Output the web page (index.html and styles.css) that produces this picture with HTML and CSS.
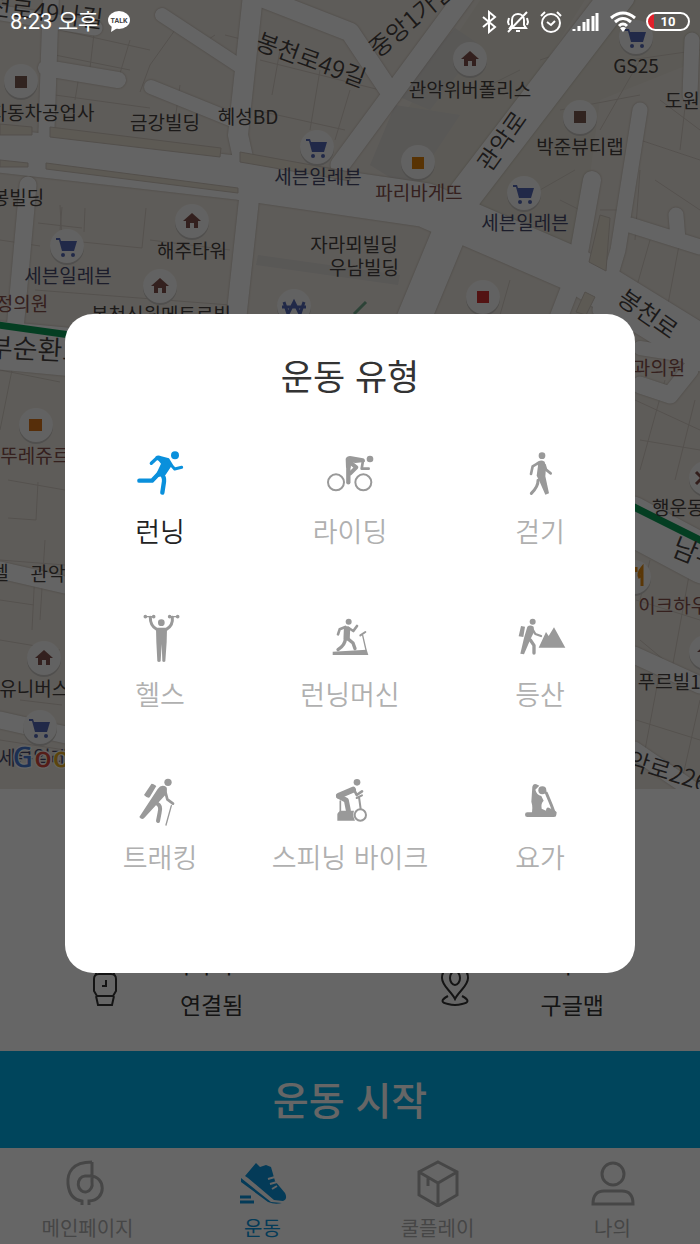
FILE: index.html
```html
<!DOCTYPE html>
<html lang="ko">
<head>
    <meta charset="UTF-8">
    <meta name="viewport" content="width=device-width, initial-scale=1.0">
    <title>운동</title>
    <link rel="stylesheet" href="styles.css">
</head>
<body>
    <div class="app">
        <svg class="map" viewBox="0 0 700 789" role="img" aria-label="지도">
            <defs>
                <g id="pin"><circle cy="2" r="17" fill="#c9c6c2"/><circle r="17" fill="#f6f5f4"/></g>
                <g id="home"><use href="#pin"/><path d="M0-8 9 0H6V7H2V2H-2V7H-6V0H-9Z" fill="#80524c"/></g>
                <g id="shop"><use href="#pin"/><path d="M-11-8H-7L-6-5H10L7 5H-5L-8-6H-11ZM-4 3V5" fill="#5468b4"/><circle cx="-4" cy="9" r="2" fill="#5468b4"/><circle cx="6" cy="9" r="2" fill="#5468b4"/></g>
            </defs>
            <rect width="700" height="789" fill="#ece6de"/>
            <path class="band" d="M480 0H585L455 205 370 165ZM630 0H700V60L600 100 580 250 470 210Z"/>
            <path class="block" d="M455 28 480 45 430 110 395 95ZM395 105 460 115 410 190 370 165ZM258 255 400 275 398 285 256 265Z"/>
            <path class="lot" d="M60 30 150 50M55 55 130 70M95 25 90 68M175 30 150 65 140 92M130 40 118 80M180 85 175 120M200 45 215 35M225 35 245 40M260 60 380 90M280 50 272 95M320 70 310 130M255 110 345 130M350 90 335 140M55 95 150 108M80 70 75 100M60 205 62 240 142 248 146 208M62 207 60 230M85 208 84 232M38 223 82 228M150 240 230 250M35 290 230 305M0 240 40 246M270 330 390 330M480 90 520 70M560 110 640 95M630 60 700 50M640 140 700 160M660 100 700 130M640 170 635 240M655 180 700 210M560 200 580 210M540 190 575 170M600 210 620 210M630 230 700 250M650 240 630 310M680 240 665 320M640 60 600 130M690 65 680 150M540 60 570 50M500 130 530 100M430 300 420 340M510 280 500 315M0 370 60 382M0 430 20 330M24 360 62 366M8 480 65 490M38 482 36 520 8 518M0 560 65 565M35 570 32 630M0 600 34 605M0 640 60 650M45 540 40 620M20 700 62 705M0 740 65 750M635 400 700 430M640 440 700 450M665 380 640 470M695 400 675 480M636 600 700 620M650 560 640 600M690 570 670 680M640 640 700 690M660 670 645 750M700 700 680 789M636 720 700 740"/>
            <g class="roads">
                <path d="M-5 12 95 28" stroke-width="15"/>
                <path d="M51-5 46 145M46 68 118 80" stroke-width="16"/>
                <path d="M151 87 240 123M162 15 238 65" stroke-width="14"/>
                <path d="M253-5 238 135 250 190 235 330" stroke-width="20"/>
                <path d="M255-5 350 32 392 95M465-5 340 165" stroke-width="19"/>
                <path d="M-5 150 240 178 425 205 575 270 705 350" stroke-width="44"/>
                <path d="M618-5 465 195 405 340" stroke-width="34"/>
                <path d="M28 185 15 330" stroke-width="17"/>
                <path d="M592 180 575 275 550 340" stroke-width="18"/>
                <path d="M640 110 618 250 600 310M692 40 690 95M630 225 700 247M676 215 678 240" stroke-width="15"/>
                <path d="M640 348 678 354 690 330 705 328" stroke-width="14"/>
                <path d="M-5 345 70 352M630 520 705 560" stroke-width="48"/>
                <path d="M0 570 65 585M634 655 700 685M634 750 700 795M640 385 670 395 690 370M0 720 66 735" stroke-width="17"/>
            </g>
            <path class="median" d="M50 127 221 148 220 157 50 137ZM0 124 32 127V135H0ZM240 152 350 172V181L240 162ZM46 163 238 188V193L46 169ZM0 160 28 163V167H0ZM600 215 589 262 606 271 610 218ZM585 292 595 297 586 315 576 312Z"/>
            <path d="M-2 325 70 335M630 505 702 541" stroke="#0c9b56" stroke-width="7"/>
            <path d="M354 314 366 302" stroke="#71a78b" stroke-width="3"/>

            <g class="places">
                <use href="#shop" x="636" y="37"/>
                <use href="#home" x="470" y="59"/>
                <use href="#shop" x="317" y="147"/>
                <use href="#shop" x="524" y="193"/>
                <use href="#shop" x="67" y="246"/>
                <use href="#home" x="192" y="221"/>
                <use href="#home" x="160" y="286"/>
                <use href="#home" x="44" y="658"/>
                <use href="#shop" x="40" y="727"/>
                <use href="#home" x="706" y="652"/>
                <use href="#pin" x="21" y="81"/><path d="M15 76h12v12H15Z" fill="#7a5b50"/>
                <use href="#pin" x="580" y="117"/><path d="M574 111h12v12h-12Z" fill="#7a5b50"/>
                <use href="#pin" x="418" y="162"/><path d="M412 157h12v12h-12Z" fill="#dd800c"/>
                <use href="#pin" x="483" y="297"/><path d="M477 291h12v12h-12Z" fill="#cf3030"/>
                <use href="#pin" x="36" y="425"/><path d="M29 419h13v12H29Z" fill="#d8731a"/>
                <use href="#pin" x="294" y="306"/><path d="M284 302 288 314 294 302 300 314 304 302M282 307H306" stroke="#5468b4" stroke-width="3" fill="none"/>
                <use href="#pin" x="706" y="478"/><path d="M696 472 702 478 696 484M702 470V486" stroke="#7d4c48" stroke-width="3" fill="none"/>
                <use href="#pin" x="634" y="577"/><path d="M636 567V572M642 586V568Q637 574 640 578" stroke="#e18a12" stroke-width="3" fill="none"/>
            </g>

            <g class="labels">
                <text x="42" y="120">자동차공업사</text>
                <text x="165" y="130">금강빌딩</text>
                <text x="248" y="124">혜성BD</text>
                <text x="470" y="97">관악위버폴리스</text>
                <text x="636" y="73">GS25</text>
                <text x="691" y="108">도원빌</text>
                <text x="580" y="154">박준뷰티랩</text>
                <text x="18" y="205">봉빌딩</text>
                <text x="318" y="184" class="store">세븐일레븐</text>
                <text x="525" y="230" class="store">세븐일레븐</text>
                <text x="68" y="283" class="store">세븐일레븐</text>
                <text x="419" y="200" class="food">파리바게뜨</text>
                <text x="192" y="258">해주타워</text>
                <text x="354" y="252">자라뫼빌딩</text>
                <text x="364" y="275">우남빌딩</text>
                <text x="22" y="311" class="food">정의원</text>
                <text x="161" y="322">봉천신원메트로빌</text>
                <text x="659" y="375" class="food">과의원</text>
                <text x="44" y="463" class="food">뚜레쥬르점</text>
                <text x="0" y="580">텔</text>
                <text x="48" y="581">관악</text>
                <text x="687" y="515">행운동점</text>
                <text x="682" y="613" class="food">이크하우스</text>
                <text x="43" y="696">유니버스빌</text>
                <text x="678" y="689">푸르빌1차</text>
                <text x="42" y="765" class="store">세븐일레븐</text>
            </g>
            <g class="street">
                <text transform="translate(45 21) rotate(7)">천로49나길</text>
                <text transform="translate(308 68) rotate(20)">봉천로49길</text>
                <text transform="translate(417 26) rotate(-40)">중앙1가길</text>
                <text transform="translate(509 146) rotate(-55)">관악로</text>
                <text transform="translate(643 321) rotate(35)">봉천로</text>
                <text transform="translate(37 359) rotate(3)" class="main">부순환로</text>
                <text transform="translate(716 573) rotate(22)" class="main">남부순환</text>
                <text transform="translate(676 783) rotate(17)">악로226길</text>
            </g>
            <text class="google" x="12" y="768"><tspan fill="#4778d0">G</tspan><tspan fill="#d4493e">o</tspan><tspan fill="#e3ab24">o</tspan><tspan fill="#4778d0">g</tspan></text>
        </svg>

        <section class="settings">
            <div class="setting">
                <svg class="setting-icon" viewBox="0 0 34 46"><path d="M8 12 9 3H25L26 12M8 34 10 43H24L26 34M11 12H23Q28 12 28 17V29L25 34H9L6 29V17Q6 12 11 12ZM18 18V24H14"/></svg>
                <div class="setting-text"><span>디바이스</span><span>연결됨</span></div>
            </div>
            <div class="setting">
                <svg class="setting-icon" viewBox="0 0 34 46"><path d="M17 37C13 29 4 24 4 16A13 13 0 0 1 30 16C30 24 21 29 17 37ZM10 34Q-1 40 10 42Q17 44 24 42Q35 40 24 34"/><ellipse cx="17" cy="16" rx="5" ry="7"/></svg>
                <div class="setting-text"><span>지도</span><span>구글맵</span></div>
            </div>
        </section>

        <button class="start">운동 시작</button>

        <nav class="tabs">
            <a href="#main">
                <svg viewBox="0 0 48 48"><path d="M28 3V23A7 8 0 1 1 21 17H26C42 17 43 41 25 42V46M28 3C8 3 3 14 4 25C5 35 10 41 18 42V46"/></svg>
                메인페이지
            </a>
            <a href="#workout" class="active">
                <svg viewBox="0 0 48 48"><path class="fill" d="M6 17 17 4 21 8 27 6 32 8 36 22 46 34Q49 40 44 42L35 41 9 19ZM2 19 32 43 43 44Q36 46 29 43L2 23Z"/><path class="lace" d="M29 20 36 18M31 25 38 23M33 30 38 27"/><path d="M1 38H12M1 43H15"/></svg>
                운동
            </a>
            <a href="#coolplay">
                <svg viewBox="0 0 48 48"><path d="M24 3 43 13V36L24 47 5 36V13ZM5 13 24 24 43 13M24 24V47M14 19V27"/></svg>
                쿨플레이
            </a>
            <a href="#me">
                <svg viewBox="0 0 48 48"><circle cx="24" cy="15" r="11"/><path d="M4 45C4 34 10 32 15 32H33C38 32 44 34 44 45Z"/></svg>
                나의
            </a>
        </nav>
    </div>

    <div class="overlay">
        <div class="modal" role="dialog" aria-labelledby="modal-title">
            <h1 id="modal-title">운동 유형</h1>
            <div class="types">
                <button class="type selected">
                    <svg viewBox="0 0 144 144"><circle class="fill" cx="117" cy="19" r="12"/><path class="fill" d="M58 23Q66 17 76 22L99 28 110 46 88 79 64 85 60 76 75 44Z"/><path d="M46 43 62 28 88 33" stroke-width="10"/><path d="M98 40 116 60 137 55" stroke-width="9"/><path d="M70 72 48 95 10 95" stroke-width="13"/><path d="M74 72Q86 84 84 98L79 131" stroke-width="13"/></svg>
                    <span>런닝</span>
                </button>
                <button class="type">
                    <svg viewBox="0 0 144 144"><circle cx="30" cy="100" r="24" stroke-width="6"/><circle cx="112" cy="100" r="24" stroke-width="6"/><circle class="fill" cx="132" cy="30" r="10"/><path class="fill" d="M59 29Q64 19 77 22L111 28Q119 31 116 39L88 42 75 40 74 56 60 56Z"/><path d="M67 30V100" stroke-width="13"/><path d="M72 40 91 55 73 73" stroke-width="12"/><path d="M111 35 107 59H128" stroke-width="8"/></svg>
                    <span>라이딩</span>
                </button>
                <button class="type">
                    <svg viewBox="0 0 144 144"><circle class="fill" cx="78" cy="20" r="10"/><path class="fill" d="M62 40Q74 30 86 38L90 55 88 82 99 133 88 137 70 96 62 80 66 50Z"/><path d="M65 43 50 52 45 75" stroke-width="8"/><path d="M86 48 90 62 104 73" stroke-width="8"/><path d="M66 94Q67 112 46 133" stroke-width="9"/></svg>
                    <span>걷기</span>
                </button>
                <button class="type">
                    <svg viewBox="0 0 144 144"><circle class="fill" cx="76" cy="32" r="10"/><path class="fill" d="M60 50H93L92 90 88 148Q84 152 79 148L77 96 74 148Q69 152 64 148L61 90Z"/><path d="M43 16Q42 40 62 52H91Q112 40 109 16" stroke-width="9"/><path d="M27 14H54M99 14H126" stroke-width="4"/><path d="M28 14V14.1M53 14V14.1M101 14V14.1M125 14V14.1" stroke-width="11"/></svg>
                    <span>헬스</span>
                </button>
                <button class="type">
                    <svg viewBox="0 0 144 144"><circle class="fill" cx="68" cy="29" r="9"/><path d="M63 52 62 76" stroke-width="19"/><path d="M58 45 41 52 36 67M68 48 82 57 93 42" stroke-width="8"/><path d="M58 80Q58 98 36 113M65 80 81 93 87 110" stroke-width="10"/><path class="fill" d="M20 119 122 113 127 129H20Z"/><path d="M120 114 110 70" stroke-width="4"/><path d="M103 70 118 60" stroke-width="6"/></svg>
                    <span>런닝머신</span>
                </button>
                <button class="type">
                    <svg viewBox="0 0 144 144"><circle class="fill" cx="50" cy="29" r="9"/><path class="fill" d="M15 42 27 44 22 75 8 73ZM34 44Q42 37 53 44L54 60 44 80 24 127 13 125 24 78Z"/><path d="M49 51 58 66 75 72" stroke-width="7"/><path d="M43 84 54 100V123" stroke-width="10"/><path class="fill" d="M68 107 90 60 98 72 114 46 148 107Z"/></svg>
                    <span>등산</span>
                </button>
                <button class="type">
                    <svg viewBox="0 0 144 144"><circle class="fill" cx="96" cy="22" r="11"/><path class="fill" d="M46 27Q49 25 61 33L41 67Q35 71 24 60ZM65 42Q76 26 91 36Q96 44 88 60L24 130Q17 136 10 126Z"/><path d="M88 50 94 73 111 86" stroke-width="8"/><path d="M64 86Q76 92 71 112L66 138" stroke-width="12"/><path d="M106 92 90 150" stroke-width="4"/></svg>
                    <span>트래킹</span>
                </button>
                <button class="type">
                    <svg viewBox="0 0 144 144"><circle class="fill" cx="93" cy="22" r="10"/><path d="M81 44 39 62" stroke-width="18"/><path d="M84 44 92 60 108 49" stroke-width="8"/><path d="M38 64 61 76 67 106" stroke-width="15"/><path d="M43 78V112" stroke-width="5"/><path class="fill" d="M34 118Q35 110 46 107H84Q79 122 87 137H34Z"/><circle cx="103" cy="120" r="17" stroke-width="6"/><path d="M104 102 99 66M92 69 108 61" stroke-width="6"/></svg>
                    <span>스피닝 바이크</span>
                </button>
                <button class="type">
                    <svg viewBox="0 0 144 144"><circle class="fill" cx="79" cy="46" r="12"/><path class="fill" d="M49 35Q51 25 61 28L70 32 58 44Q62 60 76 63L83 77Q74 84 77 101L100 112 96 120H46Q52 98 46 80Z"/><path d="M91 54 106 90 116 117" stroke-width="9"/><path d="M34 119H114" stroke-width="14"/><path d="M97 105 115 114" stroke-width="14"/></svg>
                    <span>요가</span>
                </button>
            </div>
        </div>
    </div>

    <header class="status">
        <span class="time">8:23 오후</span>
        <svg class="talk" viewBox="0 0 24 22"><ellipse cx="12" cy="9" rx="11" ry="9" fill="#fff"/><path d="M5 14 4 21 12 16Z" fill="#fff"/><text x="12" y="12">TALK</text></svg>
        <div class="status-icons">
            <svg width="16" height="24" viewBox="0 0 16 24"><path d="M2 7 14 17 8 22V2L14 7 2 17"/></svg>
            <svg width="24" height="24" viewBox="0 0 24 24"><path d="M4 18H20L18 15V10C18 2 6 2 6 10V15ZM10 21H14M2 22 21 2M3 8 2 12 3 15M21 8 22 12 21 15"/></svg>
            <svg width="24" height="24" viewBox="0 0 24 24"><circle cx="12" cy="13" r="9"/><path d="M8 12 12 15 16 11M2 6 6 2M22 6 18 2"/></svg>
            <svg width="28" height="24" viewBox="0 0 28 24"><path d="M2 19V21M7 16V21M12 12V21M16 9V21M21 6V21M25 3V21" stroke-width="3"/></svg>
            <svg width="28" height="24" viewBox="0 0 28 24"><path d="M2 8Q14-2 26 8M6 12Q14 5 22 12M10 16Q14 12 18 16" stroke-width="3"/><path d="M11 18 14 22 17 18Q14 16 11 18Z" fill="#fff" stroke="none"/></svg>
            <span class="battery">10</span>
        </div>
    </header>
</body>
</html>
```
FILE: styles.css
```css
* {
    box-sizing: border-box;
}
body {
    margin: 0;
    font-family: "Noto Sans CJK KR", "Noto Sans", sans-serif;
    background-color: #fff;
    color: #333;
}
button {
    border: none;
    padding: 0;
    background: none;
    font-family: inherit;
    cursor: pointer;
}
.app {
    min-height: 100vh;
    display: flex;
    flex-direction: column;
}

/* map */
.map {
    display: block;
    width: 100%;
    height: auto;
}
.band {
    fill: #e6e2d6;
}
.block {
    fill: #dedbd8;
}
.lot {
    fill: none;
    stroke: #d3cbc3;
    stroke-width: 1;
}
.roads {
    fill: none;
    stroke: #fafafa;
    stroke-linecap: round;
    stroke-linejoin: round;
    filter: drop-shadow(0 0 1px #b5aca2);
}
.median {
    fill: #e8e0d2;
    stroke: #cfc6bc;
}
.labels text,
.street text {
    font-size: 19px;
    fill: #464140;
    text-anchor: middle;
}
.labels .store {
    fill: #464a6c;
}
.labels .food {
    fill: #85504b;
}
.street text {
    font-size: 24px;
    font-weight: 350;
}
.street .main {
    font-size: 27px;
}
.google {
    font-family: "Open Sans", sans-serif;
    font-size: 30px;
    font-weight: bold;
    stroke: #fff;
    stroke-width: 1;
}

/* device and map settings */
.settings {
    flex: 1;
    display: flex;
    align-items: flex-end;
    padding-bottom: 24px;
}
.setting {
    flex: 1;
    display: flex;
    justify-content: space-between;
    align-items: center;
    padding: 0 96px 0 88px;
}
.setting-icon {
    width: 34px;
    height: 46px;
    fill: none;
    stroke: #333;
    stroke-width: 2;
}
.setting-text {
    display: flex;
    flex-direction: column;
    align-items: center;
    padding-bottom: 2px;
    font-size: 23px;
    line-height: 41px;
}

.start {
    height: 97px;
    padding-bottom: 4px;
    background-color: #00ade6;
    color: #fff;
    font-size: 39px;
    font-weight: 500;
}

/* bottom tabs */
.tabs {
    display: grid;
    grid-template-columns: repeat(4, 1fr);
    height: 96px;
    padding-top: 11px;
}
.tabs a {
    display: flex;
    flex-direction: column;
    align-items: center;
    gap: 6px;
    color: #b0b0b0;
    font-size: 20px;
    line-height: 30px;
    text-decoration: none;
}
.tabs svg {
    width: 48px;
    height: 48px;
    fill: none;
    stroke: currentColor;
    stroke-width: 3;
}
.tabs .fill {
    fill: currentColor;
    stroke: none;
}
.tabs .lace {
    stroke: #fff;
    stroke-width: 2;
}
.tabs .active {
    color: #0a93dc;
}

/* workout type dialog */
.overlay {
    position: absolute;
    inset: 0;
    display: flex;
    justify-content: center;
    align-items: center;
    padding: 43px 64px 0;
    background-color: rgba(0, 0, 0, 0.6);
}
.modal {
    width: 100%;
    max-width: 570px;
    padding: 36px 0 98px;
    border-radius: 28px;
    background-color: #fff;
}
.modal h1 {
    margin: 0 0 49px;
    color: #333;
    font-size: 35px;
    font-weight: normal;
    line-height: 50px;
    text-align: center;
}
.types {
    display: grid;
    grid-template-columns: repeat(3, 1fr);
    row-gap: 63px;
}
.type {
    display: flex;
    flex-direction: column;
    align-items: center;
    gap: 16px;
    color: #999;
    font-size: 27px;
    font-weight: 350;
    line-height: 36px;
    white-space: nowrap;
}
.type span {
    color: #b0b0b0;
}
.type svg {
    width: 48px;
    height: 48px;
    fill: none;
    stroke: currentColor;
    stroke-linecap: round;
    stroke-linejoin: round;
    overflow: visible;
}
.type .fill {
    fill: currentColor;
    stroke: none;
}
.type.selected {
    color: #0a90dc;
}
.type.selected span {
    color: #222;
}

/* phone status bar, above the overlay */
.status {
    position: absolute;
    top: 0;
    left: 0;
    right: 0;
    display: flex;
    align-items: center;
    height: 43px;
    padding: 0 10px;
    color: #fff;
}
.time {
    font-family: Roboto, "Noto Sans CJK KR", sans-serif;
    font-size: 22px;
    line-height: 30px;
}
.talk {
    width: 24px;
    height: 22px;
    margin-left: 9px;
}
.talk text {
    font-family: Roboto, sans-serif;
    font-size: 7px;
    font-weight: bold;
    fill: #444;
    text-anchor: middle;
}
.status-icons {
    display: flex;
    align-items: center;
    gap: 9px;
    margin-left: auto;
}
.status-icons svg {
    fill: none;
    stroke: #fff;
    stroke-width: 2;
}
.battery {
    width: 44px;
    height: 19px;
    border: 2px solid #fff;
    border-radius: 10px;
    background: linear-gradient(to right, #e0202a 6px, transparent 6px);
    font-family: Roboto, sans-serif;
    font-size: 13px;
    font-weight: bold;
    line-height: 15px;
    text-align: center;
}
```
